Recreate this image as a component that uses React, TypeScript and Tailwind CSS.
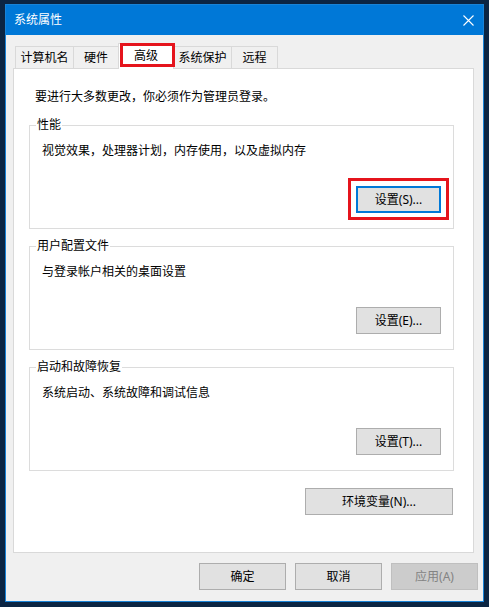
const font = { fontFamily: '"Noto Sans", "Noto Sans CJK SC", sans-serif' };

const Btn = ({
  label,
  className = "",
  disabled = false,
  focused = false,
}: {
  label: string;
  className?: string;
  disabled?: boolean;
  focused?: boolean;
}) => (
  <div
    className={`flex h-[27px] items-center justify-center text-[12px] leading-[16px] ${
      disabled
        ? "border border-[#bfbfbf] bg-[#cccccc] text-[#838383]"
        : focused
          ? "border-2 border-[#0078d7] bg-[#e1e1e1] text-black"
          : "border border-[#adadad] bg-[#e1e1e1] text-black"
    } ${className}`}
  >
    {label}
  </div>
);

const GroupBox = ({
  title,
  desc,
  children,
  className = "",
}: {
  title: string;
  desc: string;
  children: React.ReactNode;
  className?: string;
}) => (
  <div className={`h-[104px] w-[425px] border border-[#dcdcdc] ${className}`}>
    <div className="-mt-[9px] ml-[6px] block w-fit bg-white px-[1px] text-[12px] leading-[16px] text-black">
      {title}
    </div>
    <div className="mt-[10px] pl-[12px] text-[12px] leading-[16px] text-black">{desc}</div>
    <div className="mt-[27px] flex justify-end pr-[12px]">{children}</div>
  </div>
);

const tabs = [
  { name: "计算机名", w: "w-[59px]" },
  { name: "硬件", w: "w-[46px] -ml-px" },
  { name: "高级", w: "w-[56px] -ml-px", active: true },
  { name: "系统保护", w: "w-[59px] -ml-px" },
  { name: "远程", w: "w-[47px] -ml-px" },
];

export default function App() {
  return (
    <div className="h-[607px] w-[489px] bg-[#0b2543] pl-[5px] pt-[4px]" style={font}>
      <div className="flex h-[598px] w-[479px] flex-col border border-[#1883d7]">
        {/* title bar */}
        <div className="flex h-[30px] items-center justify-between bg-[#0078d7] pl-[8px] pr-[9px] text-[12px] text-white">
          <span>系统属性</span>
          <svg width="11" height="11" viewBox="0 0 11 11">
            <path d="M0.5 0.5 L10.5 10.5 M10.5 0.5 L0.5 10.5" stroke="white" strokeWidth="1.1" />
          </svg>
        </div>

        <div className="flex flex-1 flex-col bg-[#f0f0f0] pt-[8px]">
          {/* tabs */}
          <div className="ml-[9px] flex h-[25px] items-end">
            {tabs.map((t) =>
              t.active ? (
                <div
                  key={t.name}
                  className={`relative z-10 -mb-px flex h-[26px] items-start justify-center border border-b-0 border-[#d9d9d9] bg-white pt-[4px] text-[12px] leading-[16px] text-black ${t.w}`}
                >
                  {t.name}
                  <div className="absolute -top-px left-px h-[24px] w-[55px] border-[3px] border-[#e5141c]" />
                </div>
              ) : (
                <div
                  key={t.name}
                  className={`flex h-[22px] items-center justify-center border border-b-0 border-[#d9d9d9] bg-[#f0f0f0] text-[12px] leading-[16px] text-black ${t.w}`}
                >
                  {t.name}
                </div>
              )
            )}
          </div>

          {/* panel */}
          <div className="ml-[7px] flex h-[485px] w-[461px] flex-col border border-[#d9d9d9] bg-white pl-[15px]">
            <div className="mt-[20px] pl-[6px] text-[12px] leading-[16px] text-black">
              要进行大多数更改，你必须作为管理员登录。
            </div>

            <GroupBox title="性能" desc="视觉效果，处理器计划，内存使用，以及虚拟内存" className="mt-[20px]">
              <div className="relative">
                <Btn label="设置(S)..." focused className="w-[85px]" />
                <div className="absolute -bottom-[7px] -left-[8px] -right-[8px] -top-[8px] border-[3px] border-[#e5141c]" />
              </div>
            </GroupBox>

            <GroupBox title="用户配置文件" desc="与登录帐户相关的桌面设置" className="mt-[17px]">
              <Btn label="设置(E)..." className="w-[85px]" />
            </GroupBox>

            <GroupBox title="启动和故障恢复" desc="系统启动、系统故障和调试信息" className="mt-[17px]">
              <Btn label="设置(T)..." className="w-[85px]" />
            </GroupBox>

            <div className="mt-[17px] flex w-[425px] justify-end pr-px">
              <Btn label="环境变量(N)..." className="w-[148px]" />
            </div>
          </div>

          {/* bottom buttons */}
          <div className="mt-[10px] flex justify-end gap-[9px] pr-[5px]">
            <Btn label="确定" className="w-[87px]" />
            <Btn label="取消" className="w-[87px]" />
            <Btn label="应用(A)" disabled className="w-[87px]" />
          </div>
        </div>
      </div>
    </div>
  );
}
